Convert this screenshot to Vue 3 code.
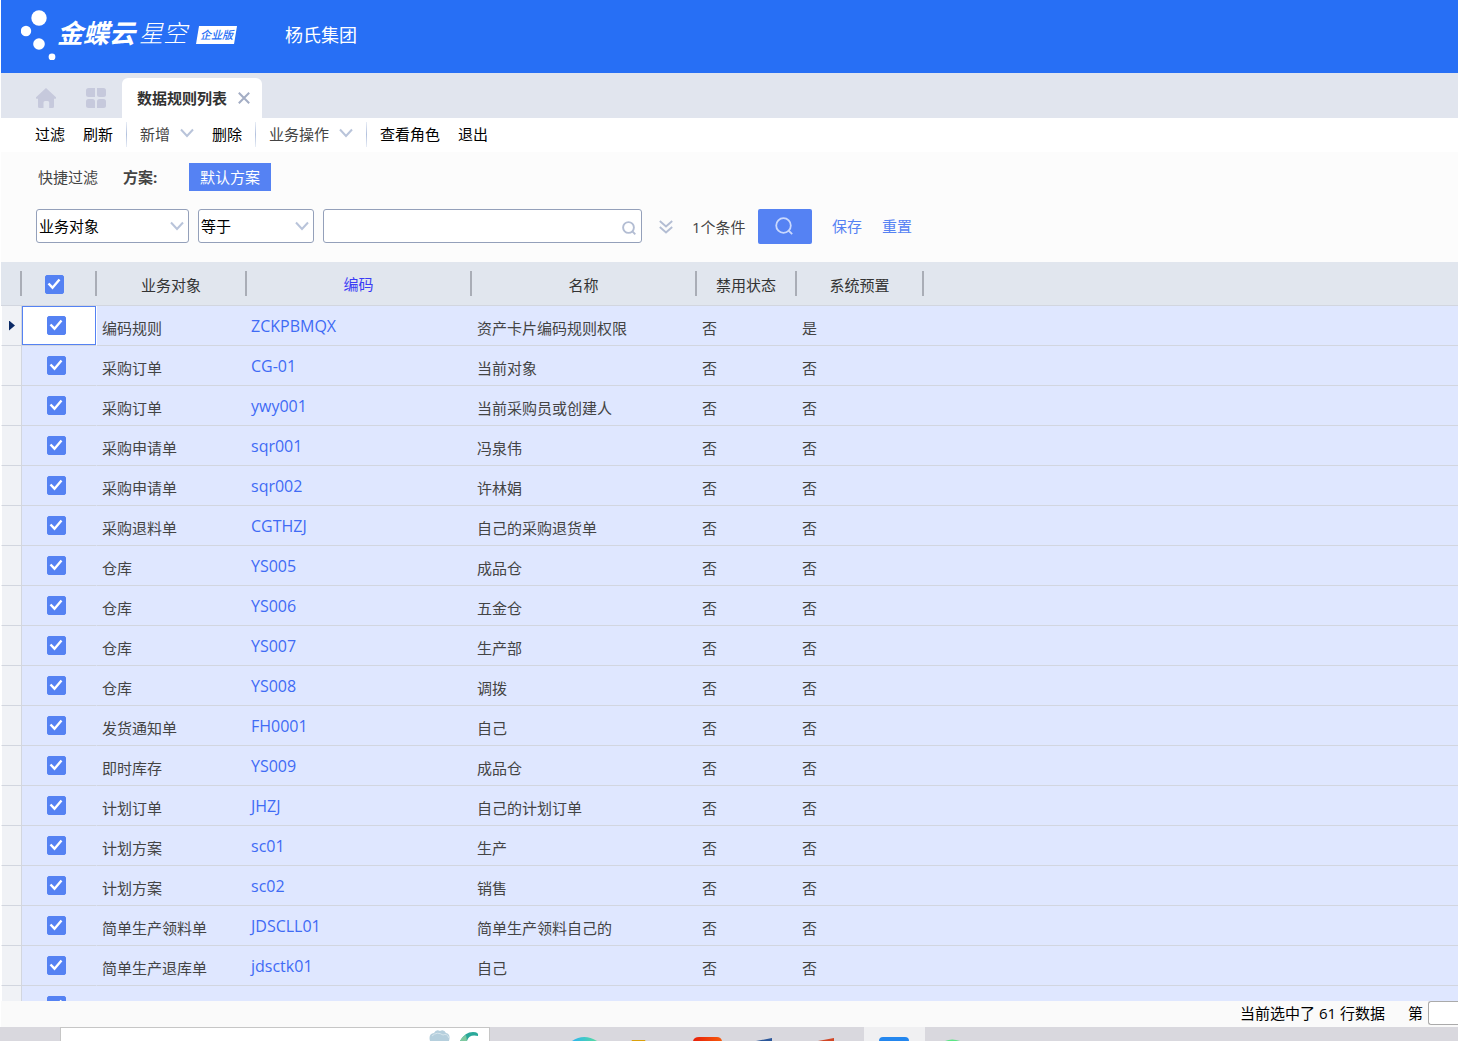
<script setup>
import { ref } from 'vue'

const field = ref('业务对象')
const operator = ref('等于')
const keyword = ref('')
const allChecked = ref(true)

const rows = ref(
  [
    ['编码规则', 'ZCKPBMQX', '资产卡片编码规则权限', '否', '是'],
    ['采购订单', 'CG-01', '当前对象', '否', '否'],
    ['采购订单', 'ywy001', '当前采购员或创建人', '否', '否'],
    ['采购申请单', 'sqr001', '冯泉伟', '否', '否'],
    ['采购申请单', 'sqr002', '许林娟', '否', '否'],
    ['采购退料单', 'CGTHZJ', '自己的采购退货单', '否', '否'],
    ['仓库', 'YS005', '成品仓', '否', '否'],
    ['仓库', 'YS006', '五金仓', '否', '否'],
    ['仓库', 'YS007', '生产部', '否', '否'],
    ['仓库', 'YS008', '调拨', '否', '否'],
    ['发货通知单', 'FH0001', '自己', '否', '否'],
    ['即时库存', 'YS009', '成品仓', '否', '否'],
    ['计划订单', 'JHZJ', '自己的计划订单', '否', '否'],
    ['计划方案', 'sc01', '生产', '否', '否'],
    ['计划方案', 'sc02', '销售', '否', '否'],
    ['简单生产领料单', 'JDSCLL01', '简单生产领料自己的', '否', '否'],
    ['简单生产退库单', 'jdsctk01', '自己', '否', '否'],
    ['', '', '', '', ''],
  ].map(([object, code, name, disabled, preset]) => ({
    object, code, name, disabled, preset, checked: true,
  }))
)
</script>

<template>
  <div class="page">
    <div class="app">
      <header class="banner">
        <svg class="logo-dots" width="40" height="56" viewBox="0 0 40 56" aria-hidden="true">
          <g fill="#fff">
            <circle cx="18" cy="14" r="7.7" />
            <circle cx="5" cy="27" r="5.2" />
            <circle cx="18" cy="40" r="5.8" />
            <circle cx="31" cy="53" r="3.4" />
          </g>
        </svg>
        <span class="brand">金蝶云</span>
        <span class="brand-sub">星空</span>
        <span class="edition">企业版</span>
        <span class="org">杨氏集团</span>
      </header>

      <nav class="tabs">
        <button class="icon-tab" aria-label="首页">
          <svg width="20" height="20" viewBox="0 0 20 20" fill="#c6c9dc">
            <path d="M10 0 L20 9.3 Q20.3 10.8 19 10.8 H18 V18.500 Q18 20 16.500 20 H13.200 V14.500 Q13.200 13 11.700 13 H9 Q7.500 13 7.500 14.500 V20 H3.500 Q2 20 2 18.500 V10.800 H1 Q-.3 10.800 0 9.300 Z" />
          </svg>
        </button>
        <button class="icon-tab" aria-label="应用">
          <svg width="20" height="20" viewBox="0 0 20 20" fill="#c6c9dc">
            <path d="M2.500 0H9V9H2.500Q0 9 0 6.500V2.500Q0 0 2.500 0Z" />
            <path d="M11 0H17.500Q20 0 20 2.500V6.500Q20 9 17.500 9H13.500Q11 9 11 6.500Z" />
            <path d="M2.500 11H6.500Q9 11 9 13.500V20H2.500Q0 20 0 17.500V13.500Q0 11 2.500 11Z" />
            <path d="M13.500 11H17.500Q20 11 20 13.500V17.500Q20 20 17.500 20H11V13.500Q11 11 13.500 11Z" />
          </svg>
        </button>
        <div class="tab">
          <span>数据规则列表</span>
          <button class="close" aria-label="关闭">
            <svg width="12" height="12" viewBox="0 0 12 12" fill="none" stroke="#a3adc4" stroke-width="2">
              <path d="M.8 .8 L11.200 11.200 M11.200 .8 L.8 11.200" />
            </svg>
          </button>
        </div>
      </nav>

      <div class="toolbar">
        <button class="tool">过滤</button>
        <button class="tool">刷新</button>
        <i class="sep"></i>
        <button class="tool soft">
          新增
          <svg width="14" height="10" viewBox="0 0 14 10" fill="none" stroke="#b9c4da" stroke-width="2"><path d="M1 1.500 L7 8 L13 1.500" /></svg>
        </button>
        <button class="tool">删除</button>
        <i class="sep"></i>
        <button class="tool soft">
          业务操作
          <svg width="14" height="10" viewBox="0 0 14 10" fill="none" stroke="#b9c4da" stroke-width="2"><path d="M1 1.500 L7 8 L13 1.500" /></svg>
        </button>
        <i class="sep"></i>
        <button class="tool">查看角色</button>
        <button class="tool">退出</button>
      </div>

      <section class="filter">
        <div class="scheme">
          <span>快捷过滤</span>
          <b>方案:</b>
          <button class="scheme-btn">默认方案</button>
        </div>
        <div class="conditions">
          <select v-model="field" class="box field" aria-label="字段">
            <option>业务对象</option>
            <option>编码</option>
            <option>名称</option>
          </select>
          <select v-model="operator" class="box operator" aria-label="条件">
            <option>等于</option>
            <option>包含</option>
          </select>
          <div class="box keyword">
            <input v-model="keyword" type="text" aria-label="值" />
            <svg width="14" height="14" viewBox="0 0 14 14" fill="none" stroke="#b3bdd3" stroke-width="1.900">
              <circle cx="6.500" cy="6.500" r="5.400" /><path d="M10 10 L13.300 13.300" />
            </svg>
          </div>
          <button class="more" aria-label="更多条件">
            <svg width="14" height="14" viewBox="0 0 14 14" fill="none" stroke="#b3bdd3" stroke-width="1.900">
              <path d="M.8 1 L7 6.500 L13.200 1 M.8 7 L7 12.500 L13.200 7" />
            </svg>
          </button>
          <span class="count">1个条件</span>
          <button class="search" aria-label="搜索">
            <svg width="18" height="18" viewBox="0 0 18 18" fill="none" stroke="#c9d8fd" stroke-width="1.800">
              <circle cx="8.500" cy="8.500" r="7.300" /><path d="M13.500 13.500 L17.200 17.200" />
            </svg>
          </button>
          <a href="#" class="link">保存</a>
          <a href="#" class="link">重置</a>
        </div>
      </section>

      <main class="grid">
        <table>
          <colgroup>
            <col class="c-mark" /><col class="c-check" /><col class="c-object" /><col class="c-code" />
            <col class="c-name" /><col class="c-disabled" /><col class="c-preset" /><col />
          </colgroup>
          <thead>
            <tr>
              <th></th>
              <th class="check"><input v-model="allChecked" type="checkbox" aria-label="全选" /></th>
              <th>业务对象</th>
              <th class="sorted">编码</th>
              <th>名称</th>
              <th>禁用状态</th>
              <th>系统预置</th>
              <th class="rest"></th>
            </tr>
          </thead>
          <tbody>
            <tr v-for="(row, i) in rows" :key="i" :class="{ current: i === 0 }">
              <td class="mark"><i v-if="i === 0"></i></td>
              <td class="check"><input v-model="row.checked" type="checkbox" :aria-label="row.code || '选择'" /></td>
              <td>{{ row.object }}</td>
              <td class="code"><a v-if="row.code" href="#">{{ row.code }}</a></td>
              <td>{{ row.name }}</td>
              <td>{{ row.disabled }}</td>
              <td>{{ row.preset }}</td>
              <td></td>
            </tr>
          </tbody>
        </table>
      </main>

      <footer class="pager">
        <span>当前选中了 61 行数据</span>
        <label for="page-no">第</label>
        <input id="page-no" type="text" />
      </footer>
    </div>

    <div class="taskbar">
      <div class="task-search">
        <svg width="52" height="13" viewBox="0 0 52 13" aria-hidden="true">
          <path d="M1 13 Q-1 6 5 5 Q7 1 11 3 Q15 1 17 5 Q22 6 20 13Z" fill="#b5cfdd" />
          <path d="M3 8 Q8 3 14 7 Q18 5 20 10" fill="none" stroke="#d6e5ec" />
          <path d="M31 13 Q36 4 44 4 Q50 4 49 8 Q40 6 38 13Z" fill="#2ba99a" />
          <path d="M31 13 Q33 9 37 7 L38 13Z" fill="#7fc9a0" />
        </svg>
      </div>
      <svg class="task-icons" width="400" height="14" viewBox="0 0 400 14" aria-hidden="true">
        <defs>
          <linearGradient id="wave"><stop offset="0" stop-color="#2bb5f0" /><stop offset="1" stop-color="#58dba0" /></linearGradient>
          <linearGradient id="flame"><stop offset="0" stop-color="#e8200a" /><stop offset="1" stop-color="#f65a0c" /></linearGradient>
        </defs>
        <rect x="304" width="61" height="14" fill="#f0f0f2" />
        <path d="M12 14 Q24 6 37 14Z" fill="url(#wave)" />
        <path d="M72 14 V13.500 H85 V14Z" fill="#dba10a" stroke="#dba10a" />
        <path d="M133 14 Q134 10 139 10 H157 Q161 10 162 14Z" fill="url(#flame)" />
        <path d="M196 14 L212 11 V14Z" fill="#2b579a" />
        <path d="M258 14 L274 11 V14Z" fill="#d24726" />
        <path d="M319 14 Q319 10 323 10 H345 Q349 10 349 14Z" fill="#2386ee" />
        <path d="M385 14 Q392 11 400 14Z" fill="#5be584" />
      </svg>
    </div>
  </div>
</template>

<style>
body {
  margin: 0;
}
</style>

<style scoped>
.page {
  display: flex;
  flex-direction: column;
  height: 100vh;
  overflow: hidden;
  background: #fff;
  color: #444;
  font: 15px/20px "Open Sans", "Noto Sans CJK SC", sans-serif;
}
button,
input,
select {
  box-sizing: border-box;
  margin: 0;
  padding: 0;
  border: 0;
  background: none;
  color: inherit;
  font: inherit;
}
svg {
  display: block;
  flex: none;
}
a {
  text-decoration: none;
}
.app {
  flex: 1;
  min-height: 0;
  display: flex;
  flex-direction: column;
  padding-left: 1px;
}

/* top banner */
.banner {
  flex: none;
  box-sizing: border-box;
  display: flex;
  align-items: center;
  height: 73px;
  padding: 0 0 3px 20px;
  background: #276ff5;
  color: #fff;
  white-space: nowrap;
}
.logo-dots {
  margin-right: -4px;
  padding-bottom: 6px;
}
.brand {
  font-size: 26px;
  font-weight: 700;
  font-style: italic;
  line-height: 30px;
  padding-bottom: 4px;
}
.brand-sub {
  margin-left: 4px;
  font-size: 24px;
  font-weight: 300;
  font-style: italic;
  line-height: 30px;
  padding-bottom: 4px;
}
.edition {
  box-sizing: border-box;
  width: 41px;
  height: 18px;
  margin-left: 9px;
  background: #fff;
  clip-path: polygon(3px 0, 100% 0, 38px 100%, 0 100%);
  color: #276ff5;
  font-size: 11px;
  font-weight: 500;
  font-style: italic;
  line-height: 18px;
  text-align: center;
}
.org {
  margin-left: 48px;
  font-size: 18px;
}

/* window tabs */
.tabs {
  flex: none;
  display: flex;
  align-items: flex-end;
  height: 45px;
  padding-left: 35px;
  background: #e1e5ee;
}
.icon-tab {
  height: 40px;
  margin-right: 30px;
}
.icon-tab + .icon-tab {
  margin-right: 16px;
}
.tab {
  box-sizing: border-box;
  display: flex;
  align-items: center;
  justify-content: space-between;
  width: 140px;
  height: 40px;
  padding: 0 12px 0 15px;
  border-radius: 6px 6px 0 0;
  background: #fff;
  color: #333;
  font-weight: 700;
  white-space: nowrap;
}

/* action bar */
.toolbar {
  flex: none;
  box-sizing: border-box;
  display: flex;
  align-items: center;
  height: 34px;
  padding: 0 0 2px 34px;
  color: #000;
}
.tool {
  display: flex;
  align-items: center;
  gap: 10px;
  margin-right: 18px;
  white-space: nowrap;
}
.tool:has(+ .sep) {
  margin-right: 13px;
}
.soft {
  color: #444;
}
.soft svg {
  margin-top: -2px;
}
.sep {
  width: 1px;
  height: 25px;
  margin-right: 13px;
  background: linear-gradient(#e8edf6, #b3c2de, #e8edf6);
}

/* quick filter */
.filter {
  flex: none;
  box-sizing: border-box;
  height: 110px;
  padding: 11px 0 0 35px;
  background: #fcfcfc;
}
.scheme {
  display: flex;
  align-items: center;
  height: 28px;
  padding-left: 2px;
}
.scheme b {
  width: 66px;
  margin-left: 25px;
  font-weight: 700;
}
.scheme-btn {
  width: 82px;
  height: 28px;
  background: #5582f3;
  color: #fff;
}
.conditions {
  display: flex;
  align-items: center;
  height: 35px;
  margin-top: 18px;
}
.box {
  box-sizing: border-box;
  align-self: flex-start;
  height: 34px;
  margin-right: 9px;
  border: 1px solid #94a0ba;
  border-radius: 3px;
  background: #fff;
  color: #000;
}
select.box {
  appearance: none;
  padding: 0 0 1px 2px;
  background: #fff url("data:image/svg+xml,%3Csvg xmlns='http://www.w3.org/2000/svg' width='14' height='10' fill='none' stroke='%23b9c4da' stroke-width='2'%3E%3Cpath d='M1 1.5L7 8L13 1.5'/%3E%3C/svg%3E") no-repeat right 4px center;
}
.field {
  width: 153px;
}
.operator {
  width: 116px;
}
.keyword {
  display: flex;
  align-items: center;
  width: 319px;
  padding-right: 5px;
}
.keyword input {
  flex: 1;
  min-width: 0;
  height: 100%;
  padding: 0 4px;
  outline: none;
}
.keyword svg {
  margin-top: 4px;
}
.more {
  margin: 0 19px 0 8px;
}
.count {
  width: 66px;
  white-space: nowrap;
}
.search {
  display: flex;
  align-items: center;
  justify-content: center;
  width: 54px;
  height: 35px;
  padding: 0 2px 2px 0;
  border-radius: 2px;
  background: #5582f3;
}
.link {
  margin-left: 20px;
  padding-bottom: 2px;
  color: #5582f3;
}

/* data grid */
.grid {
  flex: 1;
  min-height: 0;
  overflow: hidden;
}
table {
  width: 100%;
  table-layout: fixed;
  border-collapse: separate;
  border-spacing: 0;
}
.c-mark { width: 21px; }
.c-check { width: 75px; }
.c-object { width: 150px; }
.c-code { width: 225px; }
.c-name { width: 225px; }
.c-disabled { width: 100px; }
.c-preset { width: 127px; }
th,
td {
  box-sizing: border-box;
  border-bottom: 1px solid #d2d6df;
  white-space: nowrap;
}
th {
  height: 44px;
  padding: 3px 2px 0 0;
  background: linear-gradient(#a9adb6, #a9adb6) no-repeat right 9px / 2px 25px #e1e6ee;
  color: #333;
  font-weight: 400;
}
th.rest {
  background: #e1e6ee;
}
th.sorted {
  padding-top: 1px;
  color: #3c3cf5;
}
td {
  height: 40px;
  padding: 4px 0 0 5px;
  background: #dfe7ff;
}
td.code {
  padding: 0 0 0 4px;
  font-size: 16px;
}
.code a {
  color: #3f6bf5;
}
td.mark {
  padding: 0 0 0 7px;
  border-left: 1px solid #fff;
  border-right: 1px solid #d2d6df;
  background: #f0f2f6;
}
.mark i {
  display: block;
  width: 6px;
  height: 10px;
  background: #0b2a66;
  clip-path: polygon(0 0, 100% 50%, 0 100%);
}
th.check {
  padding: 2px 10px 0 0;
}
td.check {
  padding: 0 5px 0 0;
  border-right: 1px solid #dfe7ff;
}
.current .check {
  border-right-color: #fff;
  background: #fff;
  box-shadow: inset 0 0 0 1px #5582f3;
}
.check input {
  appearance: none;
  display: block;
  width: 19px;
  height: 19px;
  margin: 0 auto;
  border: 1px solid #5582f3;
  border-radius: 2px;
  background: #fff;
}
.check input:checked {
  background: #5582f3 url("data:image/svg+xml,%3Csvg xmlns='http://www.w3.org/2000/svg' width='17' height='17' fill='none' stroke='%23fff' stroke-width='2.4'%3E%3Cpath d='M2.500 7.500L6.500 11.700L13.500 3.500'/%3E%3C/svg%3E") no-repeat center;
}

/* status line */
.pager {
  flex: none;
  box-sizing: border-box;
  display: flex;
  align-items: center;
  justify-content: flex-end;
  height: 26px;
  padding-bottom: 2px;
  background: #fafafa;
  color: #000;
  white-space: nowrap;
}
.pager label {
  margin: 0 5px 0 23px;
}
.pager input {
  width: 30px;
  height: 24px;
  border: 1px solid #aaa;
  border-right: 0;
  border-radius: 3px 0 0 3px;
  background: #fff;
}

/* desktop taskbar */
.taskbar {
  flex: none;
  display: flex;
  height: 14px;
  background: #d9d8de;
}
.task-search {
  box-sizing: border-box;
  display: flex;
  justify-content: flex-end;
  width: 430px;
  margin-left: 60px;
  padding-right: 8px;
  border: 1px solid #c6c6c6;
  border-bottom: 0;
  background: #fff;
}
.task-icons {
  margin-left: 70px;
}
</style>
